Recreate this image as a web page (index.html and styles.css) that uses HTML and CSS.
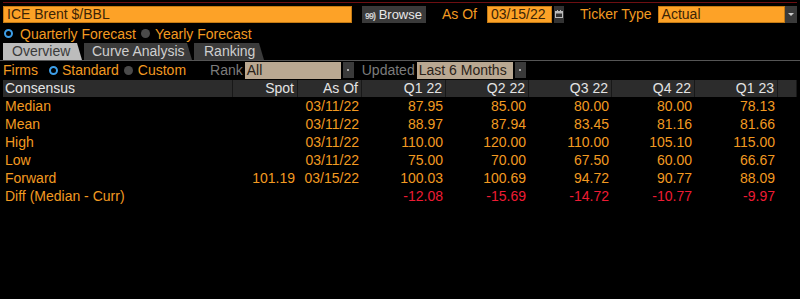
FILE: index.html
```html
<!DOCTYPE html>
<html lang="en">
<head>
  <meta charset="UTF-8">
  <title>ICE Brent Consensus</title>
  <link rel="stylesheet" href="styles.css">
</head>
<body>
  <div class="screen">
    <div class="topline"></div>

    <div class="bar">
      <div class="field ticker">ICE Brent $/BBL</div>
      <div class="btn browse"><span class="num">99)</span> Browse</div>
      <span class="label as-of">As Of</span>
      <div class="field date">03/15/22</div>
      <div class="icon-box">
        <svg width="8" height="8" viewBox="0 0 8 8"><rect x="0.5" y="1.5" width="7" height="6" fill="none" stroke="#bbb"/><rect x="0.5" y="1.5" width="7" height="2" fill="#bbb"/><rect x="2" y="0" width="1" height="2" fill="#bbb"/><rect x="5" y="0" width="1" height="2" fill="#bbb"/></svg>
      </div>
      <span class="label ticker-type">Ticker Type</span>
      <div class="field type">Actual</div>
      <div class="drop"><span class="arrow"></span></div>
    </div>

    <div class="bar options">
      <span class="radio on first"></span><span class="label">Quarterly Forecast</span>
      <span class="radio off"></span><span class="label">Yearly Forecast</span>
    </div>

    <div class="tabs">
      <div class="tab active">Overview</div>
      <div class="tab">Curve Analysis</div>
      <div class="tab">Ranking</div>
    </div>

    <div class="bar filters">
      <span class="label">Firms</span>
      <span class="radio on"></span><span class="label">Standard</span>
      <span class="radio off"></span><span class="label">Custom</span>
      <span class="muted rank">Rank</span>
      <div class="pick rank-pick">All</div>
      <div class="drop small"><span class="dot"></span></div>
      <span class="muted updated">Updated</span>
      <div class="pick upd-pick">Last 6 Months</div>
      <div class="drop small"><span class="dot"></span></div>
    </div>

    <div class="grid head">
      <div class="cell left">Consensus</div>
      <div class="cell">Spot</div>
      <div class="cell">As Of</div>
      <div class="cell">Q1 22</div>
      <div class="cell">Q2 22</div>
      <div class="cell">Q3 22</div>
      <div class="cell">Q4 22</div>
      <div class="cell">Q1 23</div>
      <div class="cell"></div>
    </div>

    <div id="rows"></div>
  </div>

  <script>
    const data = [
      ['Median', '', '03/11/22', '87.95', '85.00', '80.00', '80.00', '78.13'],
      ['Mean', '', '03/11/22', '88.97', '87.94', '83.45', '81.16', '81.66'],
      ['High', '', '03/11/22', '110.00', '120.00', '110.00', '105.10', '115.00'],
      ['Low', '', '03/11/22', '75.00', '70.00', '67.50', '60.00', '66.67'],
      ['Forward', '101.19', '03/15/22', '100.03', '100.69', '94.72', '90.77', '88.09'],
      ['Diff (Median - Curr)', '', '', '-12.08', '-15.69', '-14.72', '-10.77', '-9.97']
    ];

    const rowsEl = document.getElementById('rows');
    data.forEach(row => {
      const line = document.createElement('div');
      line.className = 'grid line';
      row.forEach((val, i) => {
        const cell = document.createElement('div');
        cell.className = i === 0 ? 'cell left' : 'cell';
        if (val.startsWith('-')) cell.classList.add('neg');
        cell.innerText = val;
        line.appendChild(cell);
      });
      line.appendChild(document.createElement('div'));
      rowsEl.appendChild(line);
    });
  </script>
</body>
</html>
```

FILE: styles.css
```css
body {
  margin: 0;
  background-color: #000;
  color: #f29a21;
  font-family: "Liberation Sans", Arial, sans-serif;
  font-size: 14px;
}
.screen {
  width: 800px;
  height: 299px;
  padding-top: 2px;
  box-sizing: border-box;
}
.topline {
  height: 1px;
  background-color: #6e0f12;
  margin: 0 3px 2px 3px;
}
.bar {
  display: flex;
  align-items: center;
  height: 18px;
  padding-left: 3px;
  white-space: nowrap;
}
.field {
  background-color: #fda227;
  color: #3b2406;
  height: 17px;
  line-height: 15px;
  padding-left: 3px;
  box-sizing: border-box;
  border: 1px solid #c47a14;
}
.ticker {
  width: 349px;
}
.btn {
  background-color: #3a3a3a;
  color: #e8e8e8;
  height: 17px;
  line-height: 17px;
  padding: 0 3px;
  margin-left: 10px;
  width: 64px;
  box-sizing: border-box;
  white-space: nowrap;
  overflow: hidden;
  font-size: 13px;
}
.num {
  font-size: 9px;
  font-weight: bold;
  letter-spacing: -1px;
  color: #cfcfcf;
}
.label {
  color: #f29a21;
}
.as-of {
  margin-left: 16px;
}
.date {
  width: 65px;
  margin-left: 10px;
}
.icon-box {
  width: 10px;
  height: 17px;
  margin-left: 2px;
  background-color: #333;
  display: flex;
  align-items: center;
  justify-content: center;
}
.ticker-type {
  margin-left: 16px;
}
.type {
  width: 127px;
  margin-left: 6px;
}
.drop {
  width: 12px;
  height: 17px;
  background-color: #3a3a3a;
  display: flex;
  align-items: center;
  justify-content: center;
}
.arrow {
  width: 0;
  height: 0;
  border-left: 3px solid transparent;
  border-right: 3px solid transparent;
  border-top: 3px solid #ccc;
}
.dot {
  width: 2px;
  height: 2px;
  background-color: #aaa;
}
.options {
  height: 17px;
  margin-top: 2px;
}
.radio {
  flex: none;
  width: 9px;
  height: 9px;
  border-radius: 50%;
  box-sizing: border-box;
  margin: 0 4px 0 11px;
}
.radio.first {
  margin-left: 1px;
  margin-right: 7px;
}
.radio.on {
  border: 2px solid #3d9ee8;
  background-color: #000;
}
.radio.off {
  background-color: #4a4a4a;
  margin-left: 5px;
  margin-right: 5px;
}
.tabs {
  display: flex;
  height: 17px;
  padding-left: 3px;
  margin-top: 1px;
  border-bottom: 1px solid #555;
  white-space: nowrap;
}
.tab {
  background-color: #3b3b3b;
  color: #cfcfcf;
  height: 17px;
  line-height: 17px;
  margin-right: 2px;
  box-sizing: border-box;
  clip-path: polygon(0 0, calc(100% - 5px) 0, 100% 100%, 0 100%);
}
.tab.active {
  background-color: #bcbcbc;
  color: #3a3a3a;
  width: 79px;
  padding-left: 9px;
}
.tabs .tab:nth-child(2) {
  width: 108px;
  padding-left: 8px;
}
.tabs .tab:nth-child(3) {
  width: 70px;
  padding-left: 10px;
}
.filters {
  height: 18px;
}
.muted {
  color: #7c7c7c;
}
.rank {
  margin-left: 24px;
}
.pick {
  background-color: #b9a892;
  color: #2a2218;
  height: 17px;
  line-height: 17px;
  padding-left: 2px;
  box-sizing: border-box;
  margin-left: 2px;
}
.rank-pick {
  width: 96px;
}
.upd-pick {
  width: 96px;
}
.drop.small {
  width: 11px;
  height: 16px;
  margin-left: 2px;
}
.updated {
  margin-left: 8px;
}
.grid {
  display: grid;
  grid-template-columns: 230px 65px 64px 84px 83px 83px 83px 83px 19px;
  margin-left: 3px;
  width: 794px;
}
.head {
  margin-top: 1px;
  background-color: #2c2c2c;
  color: #e4e4e4;
  height: 17px;
  line-height: 17px;
}
.head .cell {
  border-right: 1px solid #181818;
}
.cell {
  text-align: right;
  padding-right: 3px;
  white-space: nowrap;
}
.cell.left {
  text-align: left;
  padding-left: 2px;
}
.line {
  height: 18px;
  line-height: 18px;
}
.neg {
  color: #ee1c34;
}
```
